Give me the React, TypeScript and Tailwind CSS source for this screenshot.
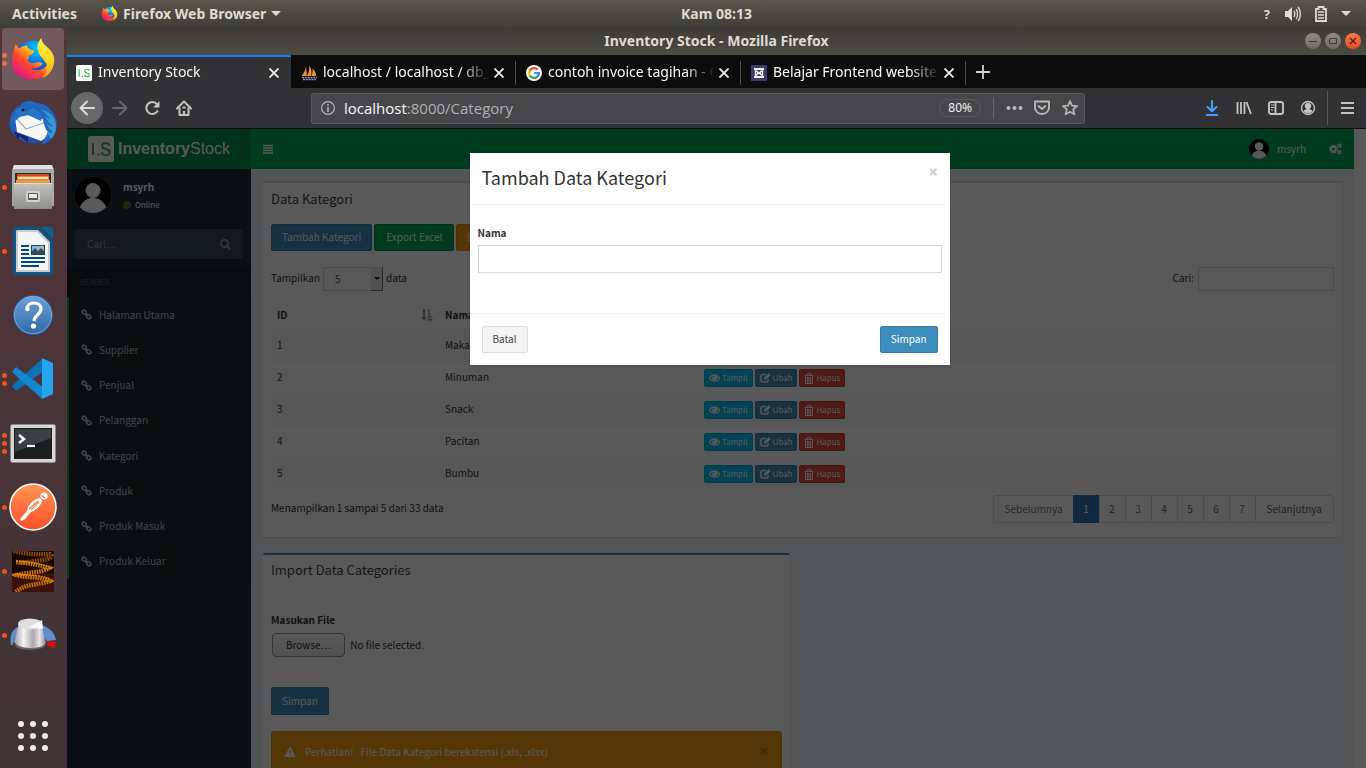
import type { ReactNode } from "react";

const uiFont = "font-['Noto_Sans','Open_Sans',sans-serif]";
const pageFont = "font-['Noto_Sans_CJK_JP','Noto_Sans_CJK_SC',sans-serif]";

/* ---------- Desktop dock ---------- */

function FirefoxLogo({ size }: { size: number }) {
  const id = "fx" + size;
  return (
    <svg width={size} height={size} viewBox="0 0 48 48" aria-hidden="true">
      <defs>
        <linearGradient id={id + "a"} x1="0.85" y1="0.1" x2="0.15" y2="0.9">
          <stop offset="0" stopColor="#fff14a" />
          <stop offset="0.35" stopColor="#ffb01e" />
          <stop offset="0.6" stopColor="#ff4a2b" />
          <stop offset="1" stopColor="#e31587" />
        </linearGradient>
        <radialGradient id={id + "b"} cx="0.6" cy="0.2" r="0.8">
          <stop offset="0" stopColor="#00c8f8" />
          <stop offset="0.5" stopColor="#0a72e0" />
          <stop offset="1" stopColor="#2a1d80" />
        </radialGradient>
        <linearGradient id={id + "c"} x1="0.5" y1="0" x2="0.5" y2="1">
          <stop offset="0" stopColor="#fff44f" />
          <stop offset="0.6" stopColor="#ffd01c" />
          <stop offset="1" stopColor="#ff980e" />
        </linearGradient>
      </defs>
      <circle cx="24" cy="25" r="20" fill={"url(#" + id + "b)"} />
      <path
        d="M6 8c1 2 2 4 4 5 2-2 5-3 8-3 0 2 1 3 3 4l4 1c1 2-2 4-5 5 0 2 0 4-2 5 2 3 5 4 8 3 3-1 6-1 8 1-3 4-8 6-13 4 6 5 16 3 20-7 1-4 1-8-1-12 4 5 5 11 3 18-3 9-10 13-19 13C11 46 2 38 2 27 2 21 4 15 6 8z"
        fill={"url(#" + id + "a)"}
      />
      <path
        d="M33 2c0 4 2 6 5 9 6 5 9 10 8 17-1 8-6 14-13 16 5-4 7-10 5-15-3-6-8-8-9-15-1-5 1-9 4-12z"
        fill={"url(#" + id + "c)"}
      />
    </svg>
  );
}

function ThunderbirdLogo() {
  return (
    <svg width="50" height="50" viewBox="0 0 50 50" aria-hidden="true">
      <defs>
        <linearGradient id="tb" x1="0" y1="0" x2="1" y2="1">
          <stop offset="0" stopColor="#1d72c8" />
          <stop offset="0.6" stopColor="#1c56b0" />
          <stop offset="1" stopColor="#1b3f93" />
        </linearGradient>
      </defs>
      <path d="M12 8c4-5 11-6 16-3 11 1 20 9 21 21 0 11-7 19-16 21l2-4c-9 4-18 2-24-3C3 36 0 29 2 22c1-7 5-12 10-14z" fill="url(#tb)" />
      <path d="M7 20l13-3 22 6-3 16-6 4-24-9z" fill="#f6f6f6" />
      <path d="M9 21l9 10 20-7" fill="none" stroke="#a9acb2" strokeWidth="1.200" />
      <path d="M12 9c7-6 17-1 20 5 4 6 3 15 8 20l-6 12c10-2 16-12 14-23C46 12 38 5 28 5 22 1 14 3 12 9z" fill="#2268c0" />
      <path d="M34 12l9 9-6-2 8 10-7-3 7 9-6-1 4 7c5-5 6-12 4-18-2-6-7-10-13-11z" fill="#3796d2" />
      <path d="M12 10l6 4 8-5 8 8-1 6-13-6-7 1-7 6c0-6 2-11 6-14z" fill="#2674c4" />
      <path d="M5 33l5 8 2-3 8 7 0-6z" fill="#1d2372" />
      <circle cx="15" cy="12" r="1.500" fill="#111" />
    </svg>
  );
}

function FilesLogo() {
  return (
    <svg width="44" height="46" viewBox="0 0 44 46" aria-hidden="true">
      <defs>
        <linearGradient id="fl" x1="0" y1="0" x2="0" y2="1">
          <stop offset="0" stopColor="#c2c2c0" />
          <stop offset="1" stopColor="#8e8e8c" />
        </linearGradient>
      </defs>
      <path d="M3 1h38l2 5v36H1V6z" fill="#a9a9a7" />
      <path d="M3 1h38l1 4H2z" fill="#e2e2e0" />
      <rect x="4" y="9" width="36" height="12" fill="#2b2b2b" />
      <rect x="6" y="10" width="32" height="9" fill="#c4501b" />
      <rect x="6" y="12" width="32" height="7" fill="#e8842c" />
      <rect x="7" y="13" width="30" height="2" fill="#f7e2bd" />
      <rect x="5" y="16" width="34" height="4" fill="#e79a45" />
      <rect x="3" y="19" width="38" height="26" rx="1" fill="url(#fl)" />
      <rect x="3" y="19" width="38" height="1" fill="#dededc" />
      <rect x="15" y="27" width="14" height="11" rx="2" fill="#d2d2d0" />
      <rect x="17" y="29" width="10" height="7" rx="1" fill="#565654" />
      <rect x="18" y="30" width="8" height="4" fill="#e8e8e6" />
    </svg>
  );
}

function WriterLogo() {
  return (
    <svg width="42" height="50" viewBox="0 0 42 50" aria-hidden="true">
      <path d="M3 1h24l14 14v32a2 2 0 0 1-2 2H3a2 2 0 0 1-2-2V3a2 2 0 0 1 2-2z" fill="#0a5687" />
      <path d="M29 1h10a2 2 0 0 1 2 2v10z" fill="#0d5f95" />
      <path d="M5 4h21l12 12v30H4V5z" fill="#c9cbcc" />
      <path d="M6 6h19l11 11v27H6z" fill="#f4f5f5" />
      <path d="M9 19h8v2H9zM9 23h8v2H9zM9 27h8v2H9zM9 31h24v2H9zM9 35h24v2H9zM9 39h18v2H9z" fill="#0a4670" />
      <rect x="19" y="19" width="14" height="10" fill="#0a4670" />
      <rect x="20" y="20" width="12" height="8" fill="#8ab9dd" />
      <path d="M20 28v-3l3-3 3 3 3-3 3 3v3z" fill="#3b4850" />
      <circle cx="30" cy="21" r="1.500" fill="#e4b62b" />
    </svg>
  );
}

function HelpLogo() {
  return (
    <svg width="42" height="42" viewBox="0 0 42 42" aria-hidden="true">
      <defs>
        <linearGradient id="hp" x1="0" y1="0" x2="0" y2="1">
          <stop offset="0" stopColor="#6f9fd6" />
          <stop offset="1" stopColor="#2f6ba6" />
        </linearGradient>
      </defs>
      <circle cx="21" cy="21" r="20" fill="#2b5f95" />
      <circle cx="21" cy="21" r="18.600" fill="url(#hp)" stroke="#8db4dd" strokeWidth="0.800" />
      <path d="M15 15c0-4 3-6 7-6 4 0 7 2 7 6 0 5-6.500 6-7 12" fill="none" stroke="#fff" strokeWidth="3.200" />
      <circle cx="15.500" cy="15" r="2.200" fill="#fff" />
      <circle cx="21.500" cy="32" r="2.600" fill="#fff" />
    </svg>
  );
}

function CodeLogo() {
  return (
    <svg width="44" height="44" viewBox="0 0 44 44" aria-hidden="true">
      <path d="M31 2L1 29l4 5 27-19z" fill="#0a73b5" />
      <path d="M31 42L1 15l4-5 27 20z" fill="#1487cf" />
      <path d="M31 1v41l11-5V6z" fill="#25a4f2" />
    </svg>
  );
}

function TerminalLogo() {
  return (
    <svg width="46" height="39" viewBox="0 0 46 39" aria-hidden="true">
      <rect x="0.500" y="0.500" width="45" height="38" rx="2" fill="#d6d6d4" stroke="#8a8a88" />
      <rect x="4" y="4" width="38" height="31" fill="#1c1f20" />
      <path d="M5 5h36v9L5 28z" fill="#3a3f41" />
      <path d="M9 11l5 4-5 4" fill="none" stroke="#f1f1ef" strokeWidth="2.600" />
      <path d="M17 22h8" stroke="#f1f1ef" strokeWidth="2.200" />
    </svg>
  );
}

function PostmanLogo() {
  return (
    <svg width="48" height="48" viewBox="0 0 48 48" aria-hidden="true">
      <defs>
        <linearGradient id="pm" x1="0" y1="0" x2="0" y2="1">
          <stop offset="0" stopColor="#ff9550" />
          <stop offset="1" stopColor="#fd4f2c" />
        </linearGradient>
      </defs>
      <circle cx="24" cy="24" r="23" fill="url(#pm)" stroke="#fff" strokeWidth="1.600" />
      <circle cx="35" cy="13" r="3.600" fill="#fff" />
      <path d="M32.500 12.500l3.500 2.500" stroke="#ff7e4a" strokeWidth="1.200" />
      <path d="M31 15c-4 0-9 4-12 9l-1 4-7 8 1 2 3-1 7-8 3-1c5-3 8-8 8-11z" fill="#fff" />
      <path d="M20 26l9-8M22 27l8-8" stroke="#ff7443" strokeWidth="1.100" />
    </svg>
  );
}

function SpringLogo() {
  return (
    <svg width="42" height="41" viewBox="0 0 42 41" aria-hidden="true">
      <rect width="42" height="41" rx="2" fill="#190602" />
      <rect y="22" width="42" height="19" rx="2" fill="#3c1204" />
      <g fill="none" strokeDasharray="1.600 0.900">
        <path d="M2 0c12 3 24 4 36 3 4 2 0 5-8 6L8 12" stroke="#8a4a08" strokeWidth="4.500" />
        <path d="M4 11c12 1 20 2 33 6-8 5-20 4-32 7 10 3 22 1 33 6-10 4-24 2-34 11" stroke="#c9720f" strokeWidth="4.500" />
      </g>
      <path d="M4 10c12 1 22 2 33 6M5 23c10 2 22 0 33 5" fill="none" stroke="#f2a62a" strokeWidth="0.900" strokeDasharray="2 1" />
    </svg>
  );
}

function KnobLogo() {
  return (
    <svg width="48" height="36" viewBox="0 0 48 36" aria-hidden="true">
      <defs>
        <linearGradient id="kb" x1="0" y1="0" x2="1" y2="0">
          <stop offset="0" stopColor="#999" />
          <stop offset="0.300" stopColor="#f3f3f3" />
          <stop offset="0.600" stopColor="#a9a9ab" />
          <stop offset="0.800" stopColor="#eee3ee" />
          <stop offset="1" stopColor="#888" />
        </linearGradient>
      </defs>
      <path d="M2 28C0 18 4 11 11 9l22-1c8 3 13 8 14 15l-9 1L30 13H14C8 16 5 21 4 28z" fill="#5f8fc8" />
      <path d="M38 24l9 1-1 7-8-4z" fill="#d10f0f" />
      <ellipse cx="21" cy="28" rx="15" ry="5" fill="#666" />
      <path d="M10 7h22l5 19c-2 3-8 5-16 5S7 28 5 25z" fill="url(#kb)" />
      <ellipse cx="21" cy="7" rx="12" ry="5.500" fill="#dedede" />
      <path d="M20 10l13-7 1 9z" fill="#f8f8f8" />
    </svg>
  );
}

const dockItems: { label: string; dots: number; icon: ReactNode }[] = [
  { label: "Firefox", dots: 2, icon: <FirefoxLogo size={46} /> },
  { label: "Thunderbird", dots: 0, icon: <ThunderbirdLogo /> },
  { label: "Files", dots: 1, icon: <FilesLogo /> },
  { label: "Writer", dots: 1, icon: <WriterLogo /> },
  { label: "Help", dots: 0, icon: <HelpLogo /> },
  { label: "Code", dots: 2, icon: <CodeLogo /> },
  { label: "Terminal", dots: 3, icon: <TerminalLogo /> },
  { label: "Postman", dots: 1, icon: <PostmanLogo /> },
  { label: "Spring", dots: 1, icon: <SpringLogo /> },
  { label: "Tuner", dots: 1, icon: <KnobLogo /> },
];

function Dock() {
  return (
    <nav className="flex w-[67px] shrink-0 flex-col overflow-hidden bg-linear-to-b from-[#52363a] via-[#4a343a] to-[#3f3334]">
      {dockItems.map((item, i) => (
        <button key={item.label} aria-label={item.label} className="flex h-16 w-full shrink-0 items-center pl-[2px]">
          <span className="flex w-0 flex-col items-start gap-[3px]">
            {Array.from({ length: item.dots }, (_, d) => (
              <span key={d} className="size-[5px] shrink-0 rounded-full bg-[#e95420]" />
            ))}
          </span>
          <span
            className={
              i === 0
                ? "flex h-[62px] w-[62px] items-center justify-center rounded-[4px] bg-white/18"
                : "flex h-[62px] w-[62px] items-center justify-center"
            }
          >
            {item.icon}
          </span>
        </button>
      ))}
      <button aria-label="Show applications" className="mt-auto flex h-16 w-[66px] shrink-0 items-center justify-center">
        <svg width="32" height="32" viewBox="0 0 32 32" fill="#efecea">
          {[4, 16, 28].map((y) => [4, 16, 28].map((x) => <circle key={x + "-" + y} cx={x} cy={y} r="3" />))}
        </svg>
      </button>
    </nav>
  );
}

/* ---------- Desktop top bar and window title ---------- */

function TopBar() {
  return (
    <header className="grid h-[27px] shrink-0 grid-cols-[1fr_auto_1fr] items-center bg-linear-to-b from-[#59564d] to-[#3f3e38] text-[14px] leading-5 font-bold text-[#dfdbd2]">
      <div className="flex items-center pl-3">
        <button className="font-bold">Activities</button>
        <button className="ml-6 flex items-center gap-[5px] font-bold">
          <FirefoxLogo size={17} />
          Firefox Web Browser
          <svg width="10" height="5" viewBox="0 0 10 5" fill="#dfdbd2">
            <path d="M0 0h10L5 5z" />
          </svg>
        </button>
      </div>
      <span className="pl-[67px]">Kam 08:13</span>
      <div className="flex items-center justify-end gap-[14px] pr-[15px]">
        <span className="text-[13px]">?</span>
        <svg width="17" height="16" viewBox="0 0 17 16" fill="#dfdbd2">
          <path d="M1 5h3l4-4v14l-4-4H1z" />
          <path d="M10 5c1 1 1 5 0 6M12 3c2 2 2 8 0 10M14 1c3 3 3 11 0 14" fill="none" stroke="#dfdbd2" strokeWidth="1.300" />
        </svg>
        <svg width="12" height="16" viewBox="0 0 12 16" fill="none" stroke="#dfdbd2">
          <path d="M1 3h2.500V1h5v2H11v12H1z" strokeWidth="1.800" />
          <path d="M3 6h6M3 9h6M3 12h6" strokeWidth="1.500" />
        </svg>
        <svg width="10" height="5" viewBox="0 0 10 5" fill="#dfdbd2">
          <path d="M0 0h10L5 5z" />
        </svg>
      </div>
    </header>
  );
}

function TitleBar() {
  return (
    <div className="grid h-7 shrink-0 grid-cols-[1fr_auto_1fr] items-center bg-linear-to-b from-[#3c3b37] to-[#4d4b44] text-[14px] leading-5 font-bold text-[#dfdbd2]">
      <span />
      <span>Inventory Stock - Mozilla Firefox</span>
      <div className="flex justify-end gap-1 pr-[5px]">
        <button aria-label="Minimize" className="flex size-4 items-center justify-center rounded-full bg-linear-to-b from-[#8f8d85] to-[#6c6a63]">
          <svg width="8" height="8" stroke="#3c3b37">
            <path d="M0 4.500h8" />
          </svg>
        </button>
        <button aria-label="Maximize" className="flex size-4 items-center justify-center rounded-full bg-linear-to-b from-[#8f8d85] to-[#6c6a63]">
          <svg width="8" height="8" stroke="#3c3b37" fill="none">
            <path d="M0.500 1.500h7v5h-7z" />
          </svg>
        </button>
        <button aria-label="Close window" className="flex size-4 items-center justify-center rounded-full bg-linear-to-b from-[#f4794f] to-[#df4a1c]">
          <svg width="8" height="8" stroke="#4a2013" strokeWidth="1.200">
            <path d="M1 1l6 6M7 1L1 7" />
          </svg>
        </button>
      </div>
    </div>
  );
}

/* ---------- Browser chrome ---------- */

function StockIcon({ size }: { size: number }) {
  return (
    <svg width={size} height={size} viewBox="0 0 26 26" aria-hidden="true">
      <rect width="26" height="26" rx="2.500" fill="#fff" />
      <path d="M5 7v12" stroke="#2fae3f" strokeWidth="1.800" />
      <path d="M9.500 17.500h2v2h-2z" fill="#2fae3f" />
      <path
        d="M21.500 10c-.4-2-1.800-3-3.800-3-2.200 0-3.600 1.200-3.600 3 0 4.200 7.700 1.800 7.700 6 0 2-1.600 3.200-4 3.200S14 18 13.800 16"
        fill="none"
        stroke="#2fae3f"
        strokeWidth="1.800"
      />
    </svg>
  );
}

function SailIcon() {
  return (
    <svg width="16" height="16" viewBox="0 0 16 16" aria-hidden="true">
      <path d="M0.500 11C3 8 4.500 5 5 1.500l1 9.500zM6 11c2-3 2.500-7 2.200-10.500C10.500 3 11 7 10 11zM10.500 11c1-2 1.300-5 1-7.500 2.500 2 3.500 5 3.500 7.500z" fill="#f29423" />
      <path d="M1 12.500h15M2 14.500h13" stroke="#8f8fc8" strokeWidth="1.600" strokeDasharray="2 0.800" />
    </svg>
  );
}

function GoogleIcon() {
  return (
    <svg width="16" height="16" viewBox="0 0 16 16" aria-hidden="true">
      <circle cx="8" cy="8" r="8" fill="#fff" />
      <g fill="none" strokeWidth="2.200">
        <path d="M11.600 4.600A5 5 0 0 0 3.600 5.700" stroke="#ea4335" />
        <path d="M3.600 5.700a5 5 0 0 0 0 4.600" stroke="#fbbc05" />
        <path d="M3.600 10.300a5 5 0 0 0 7.800 1.300" stroke="#34a853" />
        <path d="M11.400 11.600A5 5 0 0 0 13 8.100H8.200" stroke="#4285f4" />
      </g>
    </svg>
  );
}

function CourseIcon() {
  return (
    <svg width="16" height="16" viewBox="0 0 16 16" aria-hidden="true">
      <rect width="16" height="16" fill="#3b3a6b" />
      <path d="M3 4h10M3 12h10" stroke="#f2f2f6" strokeWidth="1.800" />
      <path d="M4 5l4 3 4-3M4 11l4-3 4 3M4.500 6v4M11.500 6v4M6 8h4" fill="none" stroke="#f2f2f6" strokeWidth="1.400" />
    </svg>
  );
}

const tabs: { title: string; icon: ReactNode }[] = [
  { title: "Inventory Stock", icon: <StockIcon size={16} /> },
  { title: "localhost / localhost / db_inventory", icon: <SailIcon /> },
  { title: "contoh invoice tagihan - Google", icon: <GoogleIcon /> },
  { title: "Belajar Frontend website dasar", icon: <CourseIcon /> },
];

function TabStrip() {
  return (
    <div className="flex h-[33px] shrink-0 bg-[#0c0c0d] text-[14px] leading-5 text-[#f9f9fa]">
      {tabs.map((tab, i) => (
        <div
          key={tab.title}
          className={
            i === 0
              ? "flex w-56 shrink-0 items-center border-t-2 border-[#0a84ff] bg-[#323234] pr-3 pl-[9px]"
              : "flex w-[225px] shrink-0 items-center pt-[2px] pr-3 pl-[10px]"
          }
        >
          {tab.icon}
          <span className="ml-[6px] min-w-0 flex-1 overflow-hidden mask-r-from-[82%] pb-px whitespace-nowrap">{tab.title}</span>
          <button aria-label="Close tab" className="ml-1 flex size-[10px] items-center">
            <svg width="10" height="10" stroke="#f0f0f0" strokeWidth="1.800">
              <path d="M0.500 0.500l9 9M9.500 0.500l-9 9" />
            </svg>
          </button>
          {i > 0 && <span className="-mr-3 ml-[11px] h-6 w-px bg-[#4a4a4b]" />}
        </div>
      ))}
      <button aria-label="New tab" className="ml-[10px] flex items-center">
        <svg width="14" height="14" stroke="#cfcfd0" strokeWidth="1.800">
          <path d="M7 0v14M0 7h14" />
        </svg>
      </button>
    </div>
  );
}

function Toolbar() {
  return (
    <div className="flex h-[41px] shrink-0 items-center border-b border-[#0c0c0d] bg-[#323234]">
      <div className="flex w-[244px] items-center pl-1">
        <button aria-label="Back" className="flex size-8 items-center justify-center rounded-full bg-[#68686a]">
          <svg width="16" height="16" fill="none" stroke="#dededf" strokeWidth="2" strokeLinecap="round" strokeLinejoin="round">
            <path d="M15 8H1.500M8 1.500L1.500 8 8 14.500" />
          </svg>
        </button>
        <button aria-label="Forward" className="ml-[9px]">
          <svg width="16" height="16" className="block" fill="none" stroke="#69696b" strokeWidth="2" strokeLinecap="round" strokeLinejoin="round">
            <path d="M1 8h13.500M8 1.500L14.500 8 8 14.500" />
          </svg>
        </button>
        <button aria-label="Reload" className="ml-4">
          <svg width="16" height="16" className="block" fill="none" stroke="#c4c4c5" strokeWidth="2">
            <path d="M13.800 10.500A6 6 0 1 1 13 4.200" />
            <path d="M15.500 1v6.500H9z" fill="#c4c4c5" stroke="none" />
          </svg>
        </button>
        <button aria-label="Home" className="ml-4">
          <svg width="16" height="16" className="block" fill="none" stroke="#c4c4c5" strokeWidth="2" strokeLinejoin="round">
            <path d="M1 8.500L8 1.500l7 7" strokeLinecap="round" />
            <path d="M3.500 7.500V15h9V7.500M8 15v-4" />
            <path d="M6.500 7.500h3" />
          </svg>
        </button>
      </div>
      <div className="flex h-[31px] min-w-0 flex-1 items-center rounded-[3px] border border-[#5a5a5c] bg-[#474749] px-[9px] text-[#b1b1b3]">
        <svg width="14" height="14" viewBox="0 0 14 14" fill="none" stroke="#b1b1b3">
          <circle cx="7" cy="7" r="6.400" strokeWidth="1.200" />
          <path d="M7 6v5M7 3v1.700" strokeWidth="1.600" />
        </svg>
        <span className="ml-[9px] flex-1 font-['Open_Sans',sans-serif] text-[15px] leading-5">
          <span className="text-[#f9f9fa]">localhost</span>:8000/Category
        </span>
        <span className="rounded-full border border-[#5c5c5e] px-2 text-[12px] leading-4 text-[#f0f0f1]">80%</span>
        <span className="ml-3 h-[22px] w-px bg-[#69696b]" />
        <button aria-label="Page actions" className="ml-3">
          <svg width="17" height="16" className="block" fill="#b8b8ba">
            <circle cx="2.500" cy="8" r="2" />
            <circle cx="8.500" cy="8" r="2" />
            <circle cx="14.500" cy="8" r="2" />
          </svg>
        </button>
        <button aria-label="Save to Pocket" className="ml-[11px]">
          <svg width="16" height="16" className="block" fill="none" stroke="#b8b8ba" strokeWidth="1.900" strokeLinecap="round" strokeLinejoin="round">
            <path d="M1 1.500h14v6a7 6.500 0 0 1-14 0z" />
            <path d="M4.500 6L8 9l3.500-3" />
          </svg>
        </button>
        <button aria-label="Bookmark" className="-mr-[3px] ml-3">
          <svg width="16" height="16" className="block" fill="none" stroke="#b8b8ba" strokeWidth="1.700" strokeLinejoin="round">
            <path d="M8 1l2 4.700 5 .4-3.800 3.300 1.200 5L8 11.700l-4.400 2.700 1.200-5L1 6.100l5-.4z" />
          </svg>
        </button>
      </div>
      <div className="flex w-[281px] items-center justify-end pr-3">
        <button aria-label="Downloads">
          <svg width="16" height="16" className="block" fill="none" stroke="#45a1ff" strokeWidth="2" strokeLinecap="round" strokeLinejoin="round">
            <path d="M8 1v10M3.500 7L8 11.300 12.500 7M2.500 15h11" />
          </svg>
        </button>
        <button aria-label="Library" className="ml-4">
          <svg width="16" height="16" className="block" fill="none" stroke="#c4c4c5" strokeWidth="1.800">
            <path d="M1.500 2v12M5 2v12M8.500 2v12M10.500 2l4.500 12" />
          </svg>
        </button>
        <button aria-label="Sidebars" className="ml-4">
          <svg width="16" height="16" className="block" fill="none" stroke="#c4c4c5" strokeWidth="1.900">
            <rect x="1" y="2" width="14" height="12" rx="2" />
            <path d="M7.500 2v12" />
            <path d="M3 5h3M3 7.500h3M3 10h2" strokeWidth="1.100" />
          </svg>
        </button>
        <button aria-label="Account" className="ml-4">
          <svg width="16" height="16" className="block" fill="none" stroke="#c4c4c5">
            <circle cx="8" cy="8" r="6.500" strokeWidth="1.400" />
            <circle cx="8" cy="6" r="2.800" fill="#c4c4c5" />
            <path d="M4 11c1-2 7-2 8 0-1.500 2.500-6.500 2.500-8 0z" fill="#c4c4c5" />
          </svg>
        </button>
        <span className="ml-[11px] h-[34px] w-px bg-[#59595b]" />
        <button aria-label="Menu" className="ml-[13px]">
          <svg width="13" height="16" className="block" stroke="#c4c4c5" strokeWidth="2">
            <path d="M0 3h13M0 8h13M0 13h13" />
          </svg>
        </button>
      </div>
    </div>
  );
}

/* ---------- Application icons ---------- */

function Avatar({ size }: { size: number }) {
  return (
    <svg width={size} height={size} viewBox="0 0 36 36" className="shrink-0" aria-hidden="true">
      <clipPath id={"av" + size}>
        <circle cx="18" cy="18" r="18" />
      </clipPath>
      <circle cx="18" cy="18" r="18" fill="#000" />
      <g clipPath={"url(#av" + size + ")"} fill="#fff">
        <circle cx="18" cy="13.500" r="7.500" />
        <path d="M4 36c0-9 6-15 14-15s14 6 14 15z" />
      </g>
    </svg>
  );
}

function LinkIcon() {
  return (
    <svg width="11" height="11" viewBox="0 0 12 12" fill="none" stroke="currentColor" strokeWidth="1.700" className="shrink-0">
      <rect x="1" y="1.800" width="5.200" height="3.600" rx="1.800" transform="rotate(42 3.600 3.600)" />
      <rect x="5.800" y="6.600" width="5.200" height="3.600" rx="1.800" transform="rotate(42 8.400 8.400)" />
      <path d="M4.600 4.600l2.800 2.800" />
    </svg>
  );
}

function CogsIcon() {
  return (
    <svg width="13" height="12" viewBox="0 0 13 12" fill="none" stroke="currentColor" aria-hidden="true">
      <circle cx="4.300" cy="6" r="2.500" strokeWidth="1.800" />
      <circle cx="4.300" cy="6" r="3.800" strokeWidth="1.200" strokeDasharray="1.500 1.500" />
      <circle cx="10.400" cy="2.700" r="1.500" strokeWidth="1.300" />
      <circle cx="10.400" cy="9.300" r="1.500" strokeWidth="1.300" />
    </svg>
  );
}

function EyeIcon() {
  return (
    <svg width="11" height="10" viewBox="0 0 11 10" aria-hidden="true">
      <path d="M0.500 5C3 0.800 8 0.800 10.500 5 8 9.200 3 9.200 0.500 5z" fill="none" stroke="currentColor" strokeWidth="1.100" />
      <circle cx="5.500" cy="4.500" r="2.600" fill="currentColor" />
      <circle cx="4.700" cy="3.800" r="0.800" fill="#00c0ef" />
    </svg>
  );
}

function EditIcon() {
  return (
    <svg width="11" height="10" viewBox="0 0 11 10" fill="none" stroke="currentColor" aria-hidden="true">
      <path d="M6 1.500H2.500a1.500 1.500 0 0 0-1.500 1.500v4.500A1.500 1.500 0 0 0 2.500 9h4A1.500 1.500 0 0 0 8 7.500V6" strokeWidth="1.500" />
      <path d="M4 6.800L4.500 4.600 8.800 0.300l1.900 1.900L6.200 6.400z" fill="currentColor" stroke="none" />
    </svg>
  );
}

function TrashIcon() {
  return (
    <svg width="10" height="11" viewBox="0 0 10 11" fill="none" stroke="currentColor" aria-hidden="true">
      <path d="M0.500 2.500h9M3.500 2V0.500h3V2M1.500 3v7.500h7V3M3.500 4v5.500M5 4v5.500M6.500 4v5.500" />
    </svg>
  );
}

/* ---------- Application ---------- */

const menu = ["Halaman Utama", "Supplier", "Penjual", "Pelanggan", "Kategori", "Produk", "Produk Masuk", "Produk Keluar"];

function Sidebar() {
  return (
    <aside className="w-[184px] shrink-0 bg-[#222d32]">
      <a href="#home" className="flex h-10 items-center justify-center gap-1 bg-[#008d4c] font-['Liberation_Sans',sans-serif] text-[16px] leading-5 text-white">
        <StockIcon size={26} />
        <span>
          <b>Inventory</b>Stock
        </span>
      </a>
      <div className="flex gap-3 px-2 pt-2">
        <Avatar size={36} />
        <div className="pt-[2px] text-white">
          <p className="text-[10px] leading-4 font-bold">msyrh</p>
          <p className="mt-[2px] flex items-center gap-1 text-[8px] leading-4">
            <span className="size-2 rounded-full bg-[#3c763d]" />
            Online
          </p>
        </div>
      </div>
      <form className="mx-2 mt-4 flex h-[30px] items-center rounded-[3px] bg-[#374850] px-3 text-[#999]">
        <input aria-label="Cari" placeholder="Cari...." className="min-w-0 flex-1 text-[10px] leading-4 placeholder:text-[#999]" />
        <button type="button" aria-label="Search">
          <svg width="11" height="11" className="block" fill="none" stroke="#999" strokeWidth="1.800">
            <circle cx="4.500" cy="4.500" r="3.600" />
            <path d="M7 7l3.500 3.500" />
          </svg>
        </button>
      </form>
      <h2 className="mt-2 h-[30px] bg-[#1a2226] px-3 text-[8px] leading-[30px] text-[#4b646f]">HEADER</h2>
      <ul className="flex h-[282px] flex-col">
        {menu.map((item) => (
          <li key={item} className="flex flex-1 border-l-2 border-[#00a65a] bg-[#1e282c]">
            <a href="#menu" className="flex flex-1 items-center gap-[7px] pl-3 text-[10px] leading-4 text-[#b8c7ce]">
              <LinkIcon />
              {item}
            </a>
          </li>
        ))}
      </ul>
    </aside>
  );
}

function Navbar() {
  return (
    <header className="flex h-10 shrink-0 items-center bg-[#00a65a] px-3 text-white">
      <button aria-label="Toggle menu">
        <svg width="10" height="10" className="block" stroke="#fff" strokeWidth="1.400">
          <path d="M0 1.500h10M0 4h10M0 6.500h10M0 9h10" />
        </svg>
      </button>
      <a href="#user" className="ml-auto flex items-center gap-2 text-[10px] leading-4">
        <Avatar size={20} />
        msyrh
      </a>
      <button aria-label="Settings" className="ml-[23px]">
        <CogsIcon />
      </button>
    </header>
  );
}

const rows = ["Makanan", "Minuman", "Snack", "Pacitan", "Bumbu"];
const btn = "rounded-[2px] border pb-px text-white";
const xs = "inline-flex h-[18px] items-center gap-[2px] rounded-[2px] border px-1 text-[8px] leading-4 text-white";

function CategoryBox() {
  return (
    <section className="rounded-[2px] border-t-2 border-[#d2d6de] bg-white px-2 pb-[14px] text-[10px] leading-4 text-[#333] shadow-[0_1px_1px_rgba(0,0,0,0.1)]">
      <h1 className="pt-[6px] text-[13px] leading-5 text-[#444]">Data Kategori</h1>
      <div className="mt-[15px] flex gap-[2px]">
        <button className={btn + " h-[27px] border-[#367fa9] bg-[#3c8dbc] px-[10px]"}>Tambah Kategori</button>
        <button className={btn + " h-[27px] border-[#008d4c] bg-[#00a65a] px-[11px]"}>Export Excel</button>
        <button className={btn + " h-[27px] border-[#e08e0b] bg-[#f39c12] px-[10px]"}>Export PDF</button>
      </div>
      <div className="mt-4 flex justify-between">
        <label className="flex items-center gap-[3px]">
          <span className="pb-[2px]">Tampilkan</span>
          <span className="relative flex">
            <select defaultValue="5" className="h-6 w-[60px] appearance-none border border-[#d2d6de] bg-white pl-[11px] text-[10px] leading-4 text-[#555]">
              <option>5</option>
              <option>10</option>
            </select>
            <span className="pointer-events-none absolute inset-y-0 right-0 flex w-3 items-center justify-center border-r border-b border-[#777] bg-[#ece9e6]">
              <svg width="6" height="3" fill="#222">
                <path d="M0 0h6L3 3z" />
              </svg>
            </span>
          </span>
          <span className="pb-[2px]">data</span>
        </label>
        <label className="flex items-center gap-1">
          <span className="pb-[2px]">Cari:</span>
          <input className="h-6 w-[136px] border border-[#d2d6de] bg-white px-2" />
        </label>
      </div>
      <table className="-mr-[2px] mt-[10px] w-[calc(100%+2px)] table-fixed border-collapse text-left">
        <colgroup>
          <col className="w-[168px]" />
          <col className="w-[259px]" />
          <col />
        </colgroup>
        <thead>
          <tr className="h-7">
            <th className="px-[6px] font-bold">
              <span className="flex items-center justify-between">
                ID
                <svg width="12" height="12" fill="none" stroke="#999" strokeWidth="2">
                  <path d="M3 0v9M6.500 1.500h2M6.500 4.500h3M6.500 7.500h4M6.500 10.500h5" />
                  <path d="M0 8h6L3 12z" fill="#999" stroke="none" />
                </svg>
              </span>
            </th>
            <th className="px-[6px] font-bold">Nama</th>
            <th className="px-[6px]" />
          </tr>
        </thead>
        <tbody>
          {rows.map((name, i) => (
            <tr key={name} className="h-8 border-t border-[#f0f0f0] odd:bg-[#f9f9f9]">
              <td className="px-[6px]">{i + 1}</td>
              <td className="px-[6px]">{name}</td>
              <td className="px-[6px]">
                <div className="flex gap-[2px] pt-[2px]">
                  <button className={xs + " border-[#00acd6] bg-[#00c0ef]"}>
                    <EyeIcon />
                    Tampil
                  </button>
                  <button className={xs + " border-[#367fa9] bg-[#3c8dbc]"}>
                    <EditIcon />
                    Ubah
                  </button>
                  <button className={xs + " border-[#d73925] bg-[#dd4b39]"}>
                    <TrashIcon />
                    Hapus
                  </button>
                </div>
              </td>
            </tr>
          ))}
        </tbody>
      </table>
      <div className="mt-[6px] flex items-center justify-between">
        <p className="pb-[2px]">Menampilkan 1 sampai 5 dari 33 data</p>
        <nav className="flex h-7 text-[#666]">
          <button className="rounded-l-[3px] border border-[#ddd] px-[10px] text-[#777]">Sebelumnya</button>
          {["1", "2", "3", "4", "5", "6", "7"].map((n) => (
            <button
              key={n}
              className={
                n === "1"
                  ? "-ml-px w-[27px] border border-[#337ab7] bg-[#337ab7] text-white"
                  : "-ml-px w-[27px] border border-[#ddd]"
              }
            >
              {n}
            </button>
          ))}
          <button className="-ml-px rounded-r-[3px] border border-[#ddd] px-[11px]">Selanjutnya</button>
        </nav>
      </div>
    </section>
  );
}

function ImportBox() {
  return (
    <section className="mt-4 w-[calc(50%-13px)] rounded-[2px] border-t-2 border-[#3c8dbc] bg-white text-[10px] leading-4 text-[#333] shadow-[0_1px_1px_rgba(0,0,0,0.1)]">
      <h2 className="h-12 px-2 pt-[5px] text-[13px] leading-5 text-[#444]">Import Data Categories</h2>
      <div className="h-[75px] border-t border-[#f4f4f4] px-2 pt-2">
        <label htmlFor="file" className="block font-bold">
          Masukan File
        </label>
        <div className="mt-[5px] flex items-center gap-[5px] pl-px">
          <button id="file" type="button" className="h-6 rounded-[4px] border border-[#999] bg-linear-to-b from-white to-[#e8e8e8] px-[13px] pb-px">
            Browse…
          </button>
          No file selected.
        </div>
      </div>
      <div className="border-t border-[#f4f4f4] p-2">
        <button className={btn + " h-7 border-[#367fa9] bg-[#3c8dbc] px-[10px]"}>Simpan</button>
        <div role="alert" className="mt-4 flex h-[60px] items-start rounded-[3px] border border-[#e08e0b] bg-[#f39c12] px-3 pt-3 text-white">
          <svg width="12" height="11" viewBox="0 0 11 11" className="mt-[2px]" fill="#fff">
            <path d="M5.500 0L11 11H0z" />
            <path d="M5.500 4v3.500M5.500 8.500v1.200" stroke="#f39c12" strokeWidth="1.300" />
          </svg>
          <span className="ml-[9px]">Perhatian!</span>
          <span className="ml-[7px] flex-1">File Data Kategori berekstensi (.xls, .xlsx)</span>
          <button aria-label="Dismiss" className="font-['Liberation_Sans',sans-serif] text-[15px] leading-[14px] font-bold text-black/30">
            ×
          </button>
        </div>
      </div>
    </section>
  );
}

function AddCategoryDialog() {
  return (
    <div className="absolute inset-0 flex items-start justify-center bg-black/65 pt-6 pr-[14px]">
      <div role="dialog" aria-label="Tambah Data Kategori" className="w-[480px] bg-white text-[10px] leading-4 text-[#333] shadow-[0_2px_3px_rgba(0,0,0,0.125)]">
        <div className="flex items-start justify-between border-b border-[#f4f4f4] p-3">
          <h3 className="pb-[3px] text-[18px] leading-6">Tambah Data Kategori</h3>
          <button aria-label="Close" className="font-['Liberation_Sans',sans-serif] text-[15px] leading-[14px] font-bold text-[#ccc]">
            ×
          </button>
        </div>
        <div className="px-2 pt-5 pb-10">
          <label htmlFor="nama" className="block font-bold">
            Nama
          </label>
          <input id="nama" className="mt-1 block h-7 w-full border border-[#d2d6de] px-2" />
        </div>
        <div className="flex justify-between border-t border-[#f4f4f4] p-3">
          <button className="h-[27px] rounded-[2px] border border-[#ddd] bg-[#f4f4f4] px-[10px] pb-px text-[#444]">Batal</button>
          <button className={btn + " h-[27px] border-[#367fa9] bg-[#3c8dbc] px-[10px]"}>Simpan</button>
        </div>
      </div>
    </div>
  );
}

export default function App() {
  return (
    <div className={"flex h-screen flex-col overflow-hidden " + uiFont}>
      <TopBar />
      <div className="flex min-h-0 flex-1">
        <Dock />
        <main className="flex min-w-0 flex-1 flex-col">
          <TitleBar />
          <TabStrip />
          <Toolbar />
          <div className={"relative flex min-h-0 flex-1 overflow-hidden " + pageFont}>
            <Sidebar />
            <div className="flex min-w-0 flex-1 flex-col bg-[#ecf0f5]">
              <Navbar />
              <div className="p-3">
                <CategoryBox />
                <ImportBox />
              </div>
            </div>
            <div className="w-3 shrink-0 bg-white" />
            <AddCategoryDialog />
          </div>
        </main>
      </div>
    </div>
  );
}
